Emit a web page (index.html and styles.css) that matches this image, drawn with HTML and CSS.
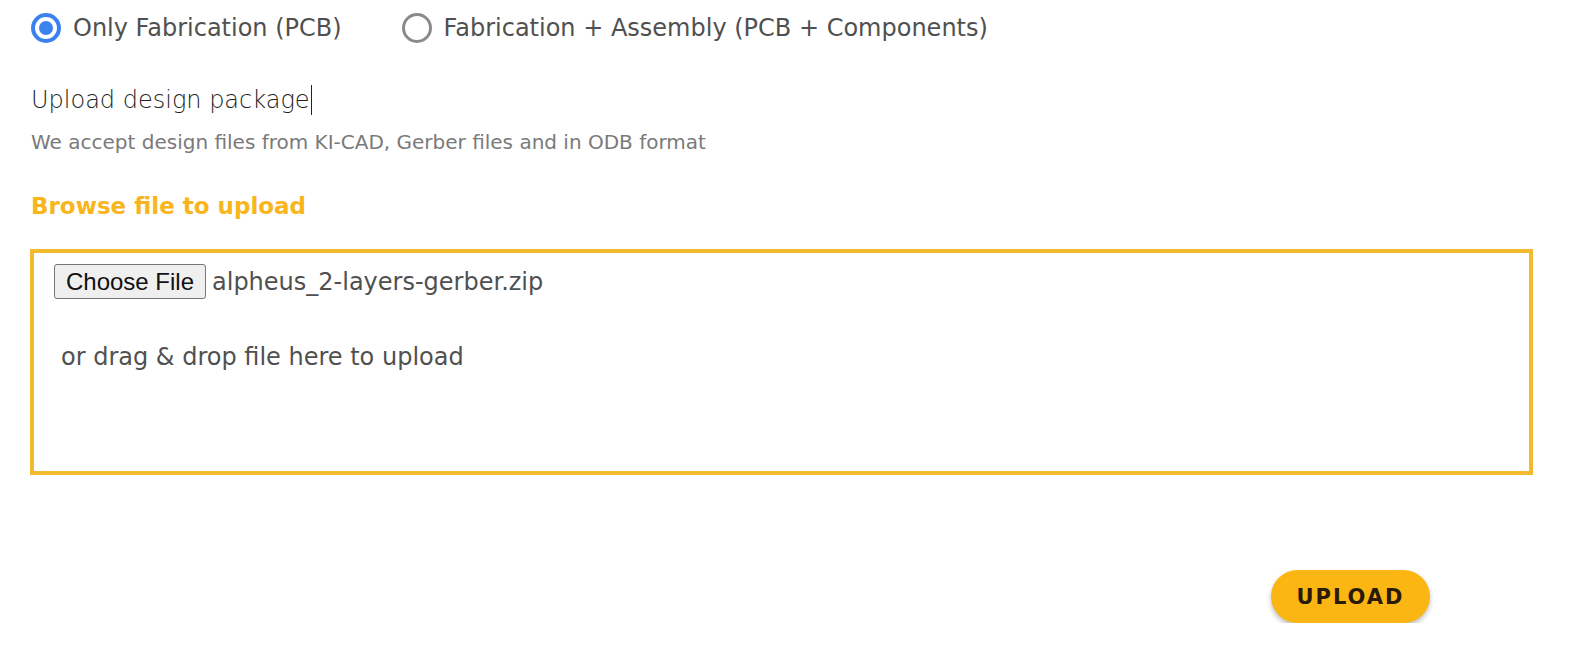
FILE: index.html
```html
<!DOCTYPE html>
<html>
<head>
<meta charset="utf-8">
<link rel="stylesheet" href="styles.css">
</head>
<body>
<div class="page">
  <div class="radios">
    <label class="radio-item">
      <span class="radio checked"><span class="dot"></span></span>
      <span class="radio-label">Only Fabrication (PCB)</span>
    </label>
    <label class="radio-item">
      <span class="radio"></span>
      <span class="radio-label">Fabrication + Assembly (PCB + Components)</span>
    </label>
  </div>

  <div class="title">Upload design package<span class="caret"></span></div>
  <div class="hint">We accept design files from KI-CAD, Gerber files and in ODB format</div>

  <div class="browse">Browse file to upload</div>

  <div class="dropzone">
    <div class="file-row">
      <span class="choose-btn">Choose File</span>
      <span class="file-name">alpheus_2-layers-gerber.zip</span>
    </div>
    <div class="drop-text">or drag &amp; drop file here to upload</div>
  </div>

  <div class="actions">
    <button class="upload-btn">UPLOAD</button>
  </div>
</div>
</body>
</html>
```

FILE: styles.css
```css
html, body {
  margin: 0;
  padding: 0;
  background: #ffffff;
}

body {
  font-family: "DejaVu Sans", "Open Sans", sans-serif;
  color: #4a4a4a;
}

.page {
  padding: 13px 0 0 31px;
  width: 1503px;
}

.radios {
  display: flex;
  align-items: center;
  height: 30px;
}

.radio-item {
  display: flex;
  align-items: center;
  gap: 12px;
  margin-right: 60px;
}

.radio {
  box-sizing: border-box;
  width: 30px;
  height: 30px;
  border-radius: 50%;
  border: 3px solid #8a8a8a;
  display: flex;
  align-items: center;
  justify-content: center;
}

.radio.checked {
  border: 4px solid #3b82f0;
}

.radio .dot {
  width: 14px;
  height: 14px;
  border-radius: 50%;
  background: #3b82f0;
}

.radio-label {
  font-size: 24px;
  color: #505050;
  line-height: 30px;
}

.title {
  margin-top: 41px;
  font-size: 24px;
  font-weight: 300;
  color: #222;
  line-height: 32px;
  display: flex;
  align-items: center;
}

.caret {
  display: inline-block;
  width: 1px;
  height: 30px;
  background: #222;
  margin-left: 1px;
}

.hint {
  margin-top: 14px;
  font-size: 20px;
  font-weight: 500;
  color: #7a7a7a;
  line-height: 24px;
}

.browse {
  margin-top: 39px;
  font-size: 23px;
  font-weight: 800;
  color: #f8b51c;
  line-height: 26px;
}

.dropzone {
  box-sizing: border-box;
  margin-top: 30px;
  margin-left: -1px;
  width: 1503px;
  height: 226px;
  border: 4px solid #f2bb2e;
  padding: 11px 0 0 20px;
}

.file-row {
  display: flex;
  align-items: center;
  height: 35px;
}

.choose-btn {
  box-sizing: border-box;
  height: 35px;
  width: 152px;
  border: 1px solid #767676;
  border-radius: 3px;
  background: #efefef;
  font-family: "Liberation Sans", Arial, sans-serif;
  font-size: 24px;
  color: #111;
  display: flex;
  align-items: center;
  justify-content: center;
}

.file-name {
  margin-left: 6px;
  font-size: 24px;
  color: #505050;
}

.drop-text {
  margin-top: 43px;
  margin-left: 7px;
  font-size: 24px;
  color: #505050;
  line-height: 30px;
}

.actions {
  display: flex;
  justify-content: flex-end;
  width: 1399px;
  margin-top: 95px;
}

.upload-btn {
  width: 159px;
  height: 53px;
  border: none;
  border-radius: 27px;
  background: #fbb614;
  box-shadow: 0 3px 5px rgba(0, 0, 0, 0.25);
  font-family: "DejaVu Sans", "Open Sans", sans-serif;
  font-weight: 700;
  font-size: 21px;
  letter-spacing: 2px;
  color: #2a1a08;
  padding: 0;
}
```
